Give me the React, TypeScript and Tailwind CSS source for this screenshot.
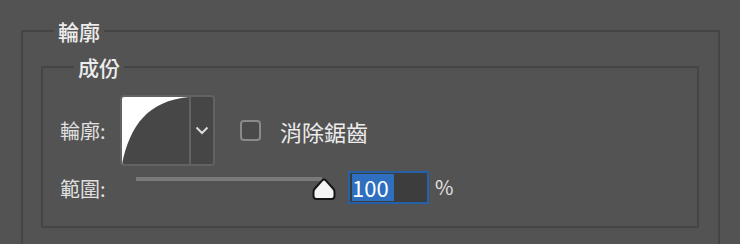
import React from "react";

const FONT = { fontFamily: "'Noto Sans CJK TC', 'Noto Sans', sans-serif" };

// Photoshop-style contour preview: white top-left, dark fill under a log curve
const ContourPreview = () => (
  <svg width="67" height="67" viewBox="0 0 67 67" className="block">
    <rect width="67" height="67" fill="#ffffff" />
    <path d="M0,67 C8,28 26,4 67,0 L67,67 Z" fill="#474747" />
  </svg>
);

const SliderThumb = () => (
  <svg width="24" height="24" viewBox="0 0 24 24" className="block">
    <path
      d="M12,2.5 Q13,2.5 14,3.6 L21.5,12 Q22.5,13.2 22.5,15 L22.5,19 Q22.5,22 19.5,22 L4.5,22 Q1.5,22 1.5,19 L1.5,15 Q1.5,13.2 2.5,12 L10,3.6 Q11,2.5 12,2.5 Z"
      fill="#f4f4f4"
      stroke="#161616"
      strokeWidth="2"
    />
  </svg>
);

export default function App() {
  return (
    <div className="w-[740px] h-[244px] overflow-hidden bg-[#535353] pt-[19px]" style={FONT}>
      <fieldset className="ml-[21px] w-[699px] border-2 border-[#454545] px-[18px] pb-[40px]">
        <legend className="ml-[13px] px-[4px] text-[21px] leading-[24px] font-medium text-[#ececec]">輪廓</legend>

        <fieldset className="mt-[12px] w-[658px] border-2 border-[#454545] pl-[17px] pt-[16px] pb-[22px]">
          <legend className="ml-[14px] px-[4px] text-[21px] leading-[24px] font-medium text-[#ececec]">成份</legend>

          {/* contour row */}
          <div className="flex items-center">
            <span className="w-[60px] text-[20px] leading-[24px] text-[#e0e0e0]">輪廓:</span>
            <div className="flex h-[71px] w-[95px] overflow-hidden rounded-[4px] border-2 border-[#626262]">
              <div className="h-[67px] w-[67px]">
                <ContourPreview />
              </div>
              <div className="flex flex-1 items-center justify-center border-l-2 border-[#626262] bg-[#464646]">
                <svg width="14" height="9" viewBox="0 0 14 9">
                  <path d="M1.5,1.5 L7,7 L12.5,1.5" fill="none" stroke="#dcdcdc" strokeWidth="2" />
                </svg>
              </div>
            </div>
            <div className="ml-[25px] h-[21px] w-[21px] rounded-[4px] border-2 border-[#8a8a8a] bg-[#4a4a4a]" />
            <span className="ml-[19px] text-[22px] leading-[26px] text-[#ececec]">消除鋸齒</span>
          </div>

          {/* range row */}
          <div className="mt-[5px] flex items-start">
            <span className="mt-[6px] w-[76px] text-[20px] leading-[24px] text-[#e0e0e0]">範圍:</span>
            <div className="relative mt-[6px] h-[26px] w-[200px]">
              <div className="h-[4px] w-[186px] bg-[#7a7a7a]" />
              <div className="absolute left-[176px] top-[0px]">
                <SliderThumb />
              </div>
            </div>
            <div className="ml-[12px] flex h-[33px] w-[81px] items-center border-2 border-[#2561a8] bg-[#3d3d3d] p-[2px]">
              <span className="flex h-[27px] w-[42px] items-center bg-[#2e6fbf] text-[22px] leading-[27px] text-white">
                100
              </span>
            </div>
            <span className="ml-[6px] mt-[3px] text-[20px] leading-[26px] text-[#e0e0e0]">%</span>
          </div>
        </fieldset>
      </fieldset>
    </div>
  );
}
